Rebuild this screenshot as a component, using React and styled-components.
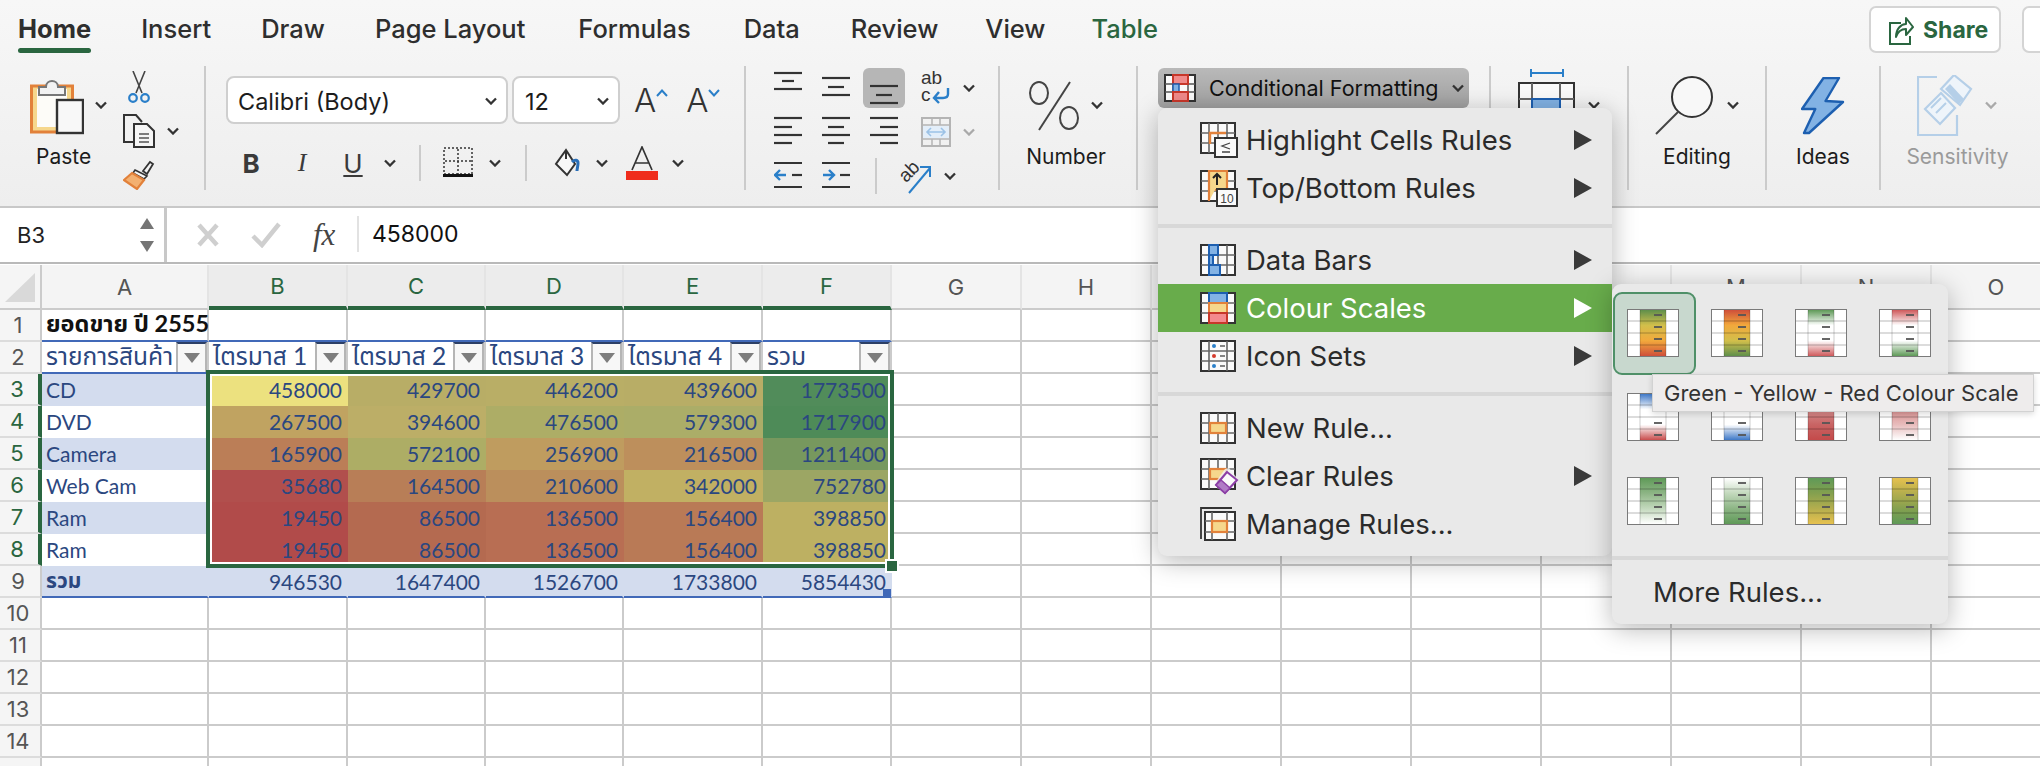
import React from "react";
import styled, { createGlobalStyle } from "styled-components";

const GREEN = "#2a6640";
const NAVY = "#2b4780";
const TABLE_BLUE = "#4169b8";
const BAND = "#d3dcee";
const GRID = "#cbcbcb";
const SHEET_FONT = `"Lato", "Noto Sans Thai", "Noto Sans Thai Looped", "Noto Sans", "DejaVu Sans", sans-serif`;

const GlobalStyle = createGlobalStyle`
  html, body { margin: 0; padding: 0; background: #fff; }
  body { font-family: "Inter", "Liberation Sans", sans-serif; color: #333; }
`;

const Page = styled.div`
  position: relative;
  width: 2040px;
  height: 766px;
  overflow: hidden;
  background: #fff;
`;

/* ribbon */
const Ribbon = styled.header`
  height: 206px;
  background: linear-gradient(#f7f7f7, #eeeeee);
  border-bottom: 2px solid #c8c8c8;
`;
const TabBar = styled.nav`
  display: flex;
  height: 66px;
  padding-left: 18px;
  gap: 50px;
  box-sizing: border-box;
`;
const Tab = styled.div`
  padding-top: 12px;
  margin-left: ${(p) => p.$ml || 0}px;
  font-size: 25.5px;
  line-height: 34px;
  font-weight: ${(p) => (p.$active ? 700 : 500)};
  color: ${(p) => (p.$green ? GREEN : "#2e2e2e")};
`;
const TabLine = styled.div`
  height: 5px;
  margin-top: 2px;
  border-radius: 3px;
  background: ${GREEN};
`;
const TabEnd = styled.div`
  margin-left: auto;
  display: flex;
  gap: 21px;
  padding-top: 6px;
`;
const ShareButton = styled.div`
  display: flex;
  align-items: center;
  gap: 9px;
  width: 132px;
  height: 47px;
  box-sizing: border-box;
  padding-left: 17px;
  background: #fff;
  border: 2px solid #d4d4d4;
  border-radius: 7px;
  color: ${GREEN};
  font-size: 23px;
  font-weight: 700;
`;
const BlankButton = styled.div`
  width: 18px;
  height: 47px;
  box-sizing: border-box;
  background: #fff;
  border: 2px solid #d4d4d4;
  border-right: 0;
  border-radius: 7px 0 0 7px;
`;
const ToolRow = styled.div`
  display: flex;
  height: 124px;
`;
const Group = styled.section`
  position: relative;
  flex: none;
  width: ${(p) => p.$w}px;
  height: 124px;
  box-sizing: border-box;
  padding-left: ${(p) => p.$pl || 0}px;
  border-right: 2px solid #cbcbcb;
  display: ${(p) => (p.$flex ? "flex" : "block")};
  justify-content: ${(p) => (p.$center ? "center" : "flex-start")};
  &:last-child { border-right: 0; }
`;
const PasteColumn = styled.div`
  display: flex;
  flex-direction: column;
  margin-right: 16px;
`;
const PasteTop = styled.div`
  display: flex;
  align-items: center;
  gap: 11px;
  margin-top: 9px;
`;
const PasteLabel = styled.div`
  margin: 10px 0 0 6px;
  font-size: 21px;
  line-height: 24px;
  color: #1c1c1c;
`;
const SmallColumn = styled.div`
  display: flex;
  flex-direction: column;
  gap: 11px;
  padding-top: 6px;
`;
const SmallTool = styled.div`
  display: flex;
  align-items: center;
  gap: 12px;
  height: 32px;
  padding-left: ${(p) => p.$pl || 0}px;
`;
const FontRow = styled.div`
  display: flex;
  align-items: center;
  height: 48px;
  margin-top: 10px;
  gap: 4px;
`;
const FontRowTwo = styled.div`
  display: flex;
  align-items: center;
  height: 36px;
  margin-top: 21px;
`;
const SelectBox = styled.div`
  display: flex;
  align-items: center;
  justify-content: space-between;
  width: ${(p) => p.$w}px;
  height: 48px;
  box-sizing: border-box;
  padding: 2px 9px 0 ${(p) => p.$pl}px;
  background: #fff;
  border: 2px solid #cfcfcf;
  border-radius: 8px;
  font-size: 23.5px;
  color: #1c1c1c;
`;
const SizeLetter = styled.div`
  display: flex;
  align-items: flex-start;
  margin-left: ${(p) => p.$ml}px;
  font-size: 33px;
  line-height: 40px;
  font-weight: 300;
  color: #333;
`;
const Slot = styled.div`
  display: flex;
  align-items: center;
  justify-content: center;
  flex: none;
  width: ${(p) => p.$w}px;
  height: 36px;
`;
const FormatLetter = styled.span`
  font-size: 26px;
  font-weight: ${(p) => (p.$bold ? 700 : 400)};
  font-style: ${(p) => (p.$italic ? "italic" : "normal")};
  font-family: ${(p) => (p.$italic ? `"Liberation Serif", serif` : `"Inter", sans-serif`)};
  text-decoration: ${(p) => (p.$under ? "underline" : "none")};
  color: #3a3a3a;
`;
const Divider = styled.div`
  flex: none;
  width: 2px;
  height: 36px;
  margin: 0 ${(p) => p.$r}px 0 ${(p) => p.$l}px;
  background: #cbcbcb;
`;
const AlignGrid = styled.div`
  display: grid;
  grid-template-columns: repeat(3, 48px) 80px;
  grid-auto-rows: 44px;
`;
const AlignCell = styled.div`
  display: flex;
  justify-content: center;
`;
const ActiveCell = styled.div`
  display: flex;
  justify-content: center;
  height: 40px;
  margin: 2px 3px;
  background: #b6b6b6;
  border-radius: 6px;
`;
const WrapCell = styled.div`
  display: flex;
  align-items: center;
  gap: 12px;
  padding-left: 13px;
`;
const OrientCell = styled.div`
  grid-column: span 2;
  display: flex;
  align-items: center;
  padding-left: 15px;
  gap: 12px;
`;
const BigTool = styled.div`
  display: flex;
  flex-direction: column;
  align-items: center;
  margin-right: ${(p) => p.$mr || 0}px;
`;
const BigTop = styled.div`
  display: flex;
  align-items: center;
  justify-content: center;
  gap: ${(p) => p.$gap || 12}px;
  height: 79px;
`;
const BigLabel = styled.div`
  font-size: 21px;
  line-height: 24px;
  color: ${(p) => (p.$muted ? "#9a9a9a" : "#1c1c1c")};
`;
const CondButton = styled.div`
  display: flex;
  align-items: center;
  gap: 13px;
  width: 311px;
  height: 40px;
  margin-top: 2px;
  box-sizing: border-box;
  padding-left: 6px;
  background: linear-gradient(#b9b9b9, #a0a0a0);
  border-radius: 6px;
  font-size: 21.5px;
  color: #111;
`;

/* formula bar */
const FormulaBar = styled.div`
  display: flex;
  height: 54px;
  background: #fff;
  border-bottom: 2px solid #b9b9b9;
`;
const NameBox = styled.div`
  display: flex;
  align-items: center;
  justify-content: space-between;
  width: 167px;
  box-sizing: border-box;
  padding: 0 10px 0 17px;
  border-right: 3px solid #c8c8c8;
  font-size: 22px;
  color: #222;
`;
const Steppers = styled.div`
  display: flex;
  flex-direction: column;
  gap: 12px;
`;
const FormulaIcons = styled.div`
  display: flex;
  align-items: center;
  width: 190px;
  padding-left: 30px;
  box-sizing: border-box;
  gap: 32px;
`;
const FxMark = styled.span`
  font-family: "Liberation Serif", serif;
  font-style: italic;
  font-size: 31px;
  color: #444;
`;
const FormulaValue = styled.div`
  display: flex;
  align-items: center;
  padding-left: 13px;
  height: 36px;
  margin-top: 8px;
  border-left: 2px solid #e2e2e2;
  font-size: 23px;
  color: #111;
`;

/* sheet */
const Sheet = styled.div`
  position: relative;
  padding-top: 1px;
  display: grid;
  grid-template-columns: 42px 167px 139px 138px 138px 139px 129px repeat(9, 130px);
  grid-template-rows: 45px;
  grid-auto-rows: 32px;
`;
const Corner = styled.div`
  display: flex;
  align-items: flex-end;
  justify-content: center;
  padding-bottom: 6px;
  box-sizing: border-box;
  background: #f5f5f5;
  border-right: 2px solid ${GRID};
  border-bottom: 2px solid ${GRID};
`;
const ColumnHead = styled.div`
  display: flex;
  align-items: center;
  justify-content: center;
  box-sizing: border-box;
  height: 45px;
  background: ${(p) => (p.$on ? "#ececec" : "#f4f4f4")};
  border-right: 2px solid #e4e4e4;
  border-bottom: ${(p) => (p.$on ? `4px solid ${GREEN}` : `2px solid ${GRID}`)};
  font-size: 22px;
  color: ${(p) => (p.$on ? GREEN : "#555")};
`;
const RowHead = styled.div`
  display: flex;
  align-items: center;
  justify-content: center;
  box-sizing: border-box;
  padding-right: 4px;
  background: #f5f5f5;
  border-right: ${(p) => (p.$on ? `4px solid ${GREEN}` : `2px solid ${GRID}`)};
  border-bottom: 2px solid #dcdcdc;
  font-size: 22px;
  color: ${(p) => (p.$on ? GREEN : "#555")};
`;
const Cell = styled.div`
  display: flex;
  align-items: center;
  justify-content: ${(p) => (p.$right ? "flex-end" : "flex-start")};
  box-sizing: border-box;
  padding: ${(p) => (p.$right ? "0 4px 0 0" : "0 0 0 4px")};
  background: ${(p) => p.$fill || "#fff"};
  border-right: 2px solid ${(p) => p.$fill || p.$edge || GRID};
  border-bottom: 2px solid ${(p) => p.$line || p.$fill || p.$edge || GRID};
  font-family: ${SHEET_FONT};
  font-size: ${(p) => p.$size || 21}px;
  font-weight: ${(p) => (p.$bold ? 700 : 400)};
  color: ${(p) => p.$ink || NAVY};
  white-space: nowrap;
`;
const HeadCell = styled(Cell)`
  justify-content: space-between;
  border-right-color: ${GRID};
`;
const FilterButton = styled.div`
  display: flex;
  align-items: center;
  justify-content: center;
  flex: none;
  width: 31px;
  height: 30px;
  box-sizing: border-box;
  background: #f7f7f7;
  border-left: 2px solid #b5b5b5;
  border-right: 2px solid #b5b5b5;
  border-top: 2px solid #2c3f66;
`;
const FilterArrow = styled.div`
  width: 0;
  height: 0;
  border-left: 8px solid transparent;
  border-right: 8px solid transparent;
  border-top: 10px solid #7d7d7d;
`;
const Selection = styled.div`
  position: absolute;
  left: 206px;
  top: 106px;
  width: 688px;
  height: 198px;
  box-sizing: border-box;
  border: 4px solid ${GREEN};
  box-shadow: inset 0 0 0 2px #fff;
  pointer-events: none;
`;
const Handle = styled.div`
  position: absolute;
  right: -9px;
  bottom: -9px;
  width: 10px;
  height: 10px;
  background: ${GREEN};
  border: 2px solid #fff;
`;
const ResizeMark = styled.div`
  position: absolute;
  left: 883px;
  top: 325px;
  width: 8px;
  height: 8px;
  background: ${TABLE_BLUE};
`;

/* menus */
const Menu = styled.div`
  position: absolute;
  left: 1158px;
  top: 108px;
  width: 454px;
  box-sizing: border-box;
  padding: 8px 0;
  background: #e9e9e9;
  border-radius: 9px;
  box-shadow: 0 5px 26px rgba(0, 0, 0, 0.28);
  z-index: 2;
`;
const MenuItem = styled.div`
  display: flex;
  align-items: center;
  height: 48px;
  padding: 0 20px 0 42px;
  gap: 7px;
  font-size: 27.5px;
  color: ${(p) => (p.$on ? "#fff" : "#2b2b2b")};
  background: ${(p) => (p.$on ? "#68ac4b" : "transparent")};
`;
const MenuIcon = styled.div`
  display: flex;
  flex: none;
  width: 39px;
`;
const MenuText = styled.span`
  flex: 1;
`;
const MenuGap = styled.div`
  height: 24px;
  box-sizing: border-box;
  padding-top: 12px;
  &::after {
    content: "";
    display: block;
    height: 4px;
    background: #d8d8d8;
  }
`;
const SubMenu = styled.div`
  position: absolute;
  left: 1612px;
  top: 284px;
  width: 336px;
  box-sizing: border-box;
  padding-top: 8px;
  background: #e9e9e9;
  border-radius: 9px;
  box-shadow: 0 5px 26px rgba(0, 0, 0, 0.28);
  z-index: 3;
`;
const SwatchGrid = styled.div`
  display: grid;
  grid-template-columns: repeat(4, 84px);
  grid-auto-rows: 84px;
  padding-left: 1px;
`;
const SwatchCell = styled.div`
  display: flex;
  align-items: center;
  justify-content: center;
  box-sizing: border-box;
  padding: 0 4px 2px 0;
  width: 83px;
  height: 83px;
  border-radius: 9px;
  border: 2px solid ${(p) => (p.$on ? "#4f9068" : "transparent")};
  background: ${(p) => (p.$on ? "#c8d8ce" : "transparent")};
`;
const SubLine = styled.div`
  height: 4px;
  margin-top: 12px;
  background: #d8d8d8;
`;
const MoreRow = styled.div`
  display: flex;
  align-items: center;
  height: 64px;
  padding-left: 41px;
  font-size: 27.5px;
  color: #2b2b2b;
`;
const Tooltip = styled.div`
  position: absolute;
  left: 1652px;
  top: 374px;
  width: 382px;
  height: 38px;
  box-sizing: border-box;
  display: flex;
  align-items: center;
  padding-left: 11px;
  background: #eeecec;
  border: 1px solid #d2d2d2;
  box-shadow: 0 2px 6px rgba(0, 0, 0, 0.15);
  font-size: 22px;
  color: #333;
  white-space: nowrap;
  z-index: 4;
`;

/* icons */
const Chevron = ({ muted, size = 12 }) => (
  <svg width={size} height={size * 0.67} viewBox="0 0 12 8" style={{ flex: "none" }}>
    <polyline points="1,1.5 6,6.5 11,1.5" fill="none" stroke={muted ? "#a9a9a9" : "#333"} strokeWidth="2.3" />
  </svg>
);

const ORANGE = "#e2813a";
const YELLOW = "#f6d78c";

const GridIcon = ({ children, w = 36, h = 32, cols = [9, 18, 27] }) => (
  <svg width={w} height={h} viewBox={`0 0 ${w} ${h}`} style={{ flex: "none", overflow: "visible" }}>
    <rect x="1" y="1" width="34" height="30" fill="#fafafa" stroke="#333" strokeWidth="2" />
    {cols.map((x) => (
      <line key={x} x1={x} x2={x} y1="1" y2="31" stroke="#666" strokeWidth="1.6" />
    ))}
    <line x1="1" x2="35" y1="11" y2="11" stroke="#666" strokeWidth="1.6" />
    <line x1="1" x2="35" y1="21" y2="21" stroke="#666" strokeWidth="1.6" />
    {children}
  </svg>
);

const HighlightIcon = () => (
  <GridIcon w={38} h={36}>
    <path d="M10 22V11H26" fill="none" stroke={ORANGE} strokeWidth="2.4" />
    <rect x="15" y="16" width="22" height="19" fill="#fafafa" stroke="#333" strokeWidth="2" />
    <path d="M30 21l-8 3 8 3M22 30h8" fill="none" stroke="#444" strokeWidth="1.3" />
  </GridIcon>
);
const TopBottomIcon = () => (
  <GridIcon w={38} h={36}>
    <path d="M9 31V1H27V20H15" fill={YELLOW} stroke={ORANGE} strokeWidth="2.2" />
    <path d="M17 15V5M13 8l4-4 4 4" fill="none" stroke="#222" strokeWidth="2" />
    <rect x="17" y="19" width="20" height="17" fill="#fafafa" stroke="#333" strokeWidth="2" />
    <text x="27" y="33" fontSize="12" textAnchor="middle" fill="#444" fontFamily="Liberation Sans">10</text>
  </GridIcon>
);
const BLUE_FILL = "#82b2e4";
const BLUE_LINE = "#1d5fb0";
const DataBarsIcon = () => (
  <GridIcon>
    <rect x="9" y="1" width="9" height="10" fill={BLUE_FILL} stroke={BLUE_LINE} strokeWidth="2" />
    <rect x="9" y="11" width="4" height="10" fill={BLUE_FILL} stroke={BLUE_LINE} strokeWidth="2" />
    <rect x="9" y="21" width="11" height="10" fill={BLUE_FILL} stroke={BLUE_LINE} strokeWidth="2" />
  </GridIcon>
);
const ColourScalesIcon = () => (
  <GridIcon cols={[9, 27]}>
    <rect x="9" y="1" width="18" height="10" fill={BLUE_FILL} stroke={BLUE_LINE} strokeWidth="2" />
    <rect x="9" y="11" width="18" height="10" fill={YELLOW} stroke={ORANGE} strokeWidth="2" />
    <rect x="9" y="21" width="18" height="10" fill="#f48a8e" stroke="#c8372a" strokeWidth="2" />
  </GridIcon>
);
const IconSetsIcon = () => (
  <GridIcon cols={[9, 27]}>
    {[6, 16, 26].map((y, i) => (
      <g key={y}>
        <circle cx="14" cy={y} r="2" fill={i === 1 ? "#d33a2c" : "#2a7fc9"} />
        <line x1="20" x2="25" y1={y} y2={y} stroke="#666" strokeWidth="1.6" />
      </g>
    ))}
  </GridIcon>
);
const NewRuleIcon = () => (
  <GridIcon>
    <rect x="10" y="11" width="16" height="10" fill={YELLOW} stroke={ORANGE} strokeWidth="2.2" />
  </GridIcon>
);
const ClearRulesIcon = () => (
  <GridIcon w={38} h={36}>
    <rect x="10" y="11" width="16" height="10" fill={YELLOW} stroke={ORANGE} strokeWidth="2.2" />
    <path d="M25 11l4-1 8 10-12 14-10-9z" fill="#f2f2f2" opacity="0.8" />
    <path d="M27 14l10 8-12 13-9-8z" fill="#fafafa" stroke="#8c3fa6" strokeWidth="2" />
    <path d="M21 22l9 8-5 5-9-8z" fill="#b07cc6" stroke="#8c3fa6" strokeWidth="1.5" />
  </GridIcon>
);
const ManageRulesIcon = () => (
  <svg width="36" height="34" viewBox="0 0 36 34" style={{ flex: "none" }}>
    <path d="M1 32V1H32" fill="none" stroke="#333" strokeWidth="1.8" />
    <rect x="5" y="5" width="30" height="28" fill="#fafafa" stroke="#333" strokeWidth="2" />
    <path d="M12 5V33M27 5V33M5 14H35M5 25H35" stroke="#666" strokeWidth="1.6" />
    <rect x="12" y="14" width="15" height="11" fill={YELLOW} stroke={ORANGE} strokeWidth="2.2" />
  </svg>
);
const SubArrow = ({ on }) => (
  <svg width="18" height="20" viewBox="0 0 18 20" style={{ flex: "none" }}>
    <polygon points="0,0 18,10 0,20" fill={on ? "#fff" : "#3a3a3a"} />
  </svg>
);
const CondIcon = () => (
  <svg width="32" height="28" viewBox="0 0 32 28" style={{ flex: "none" }}>
    <rect x="1" y="1" width="30" height="26" fill="#fafafa" stroke="#333" strokeWidth="2" />
    <path d="M9 1V27M24 1V27M1 10H31M1 18H31" stroke="#555" strokeWidth="1.5" />
    <rect x="9" y="1" width="15" height="9" fill="#f08a8a" stroke="#c8372a" strokeWidth="2" />
    <rect x="9" y="10" width="6" height="8" fill={BLUE_FILL} stroke={BLUE_LINE} strokeWidth="1.5" />
    <rect x="9" y="18" width="15" height="9" fill="#f08a8a" stroke="#c8372a" strokeWidth="2" />
  </svg>
);
const PasteIcon = () => (
  <svg width="54" height="60" viewBox="0 0 54 60">
    <rect x="1.5" y="11" width="41" height="46" fill={YELLOW} stroke={ORANGE} strokeWidth="3" />
    <rect x="7" y="14" width="30" height="38" fill="#fdfcf8" />
    <path d="M9 20V12H16C16 4 28 4 28 12H35V20Z" fill="#f2f2f2" stroke="#777" strokeWidth="2" />
    <rect x="27" y="25" width="26" height="33" fill="#f8f8f8" stroke="#333" strokeWidth="2.4" />
  </svg>
);
const ScissorsIcon = () => (
  <svg width="22" height="34" viewBox="0 0 22 34">
    <path d="M5 0L14 22M17 0L8 22" stroke="#444" strokeWidth="1.6" fill="none" />
    <circle cx="5" cy="27" r="3.8" fill="none" stroke="#2a7fc9" strokeWidth="2.2" />
    <circle cx="17" cy="27" r="3.8" fill="none" stroke="#2a7fc9" strokeWidth="2.2" />
  </svg>
);
const CopyIcon = () => (
  <svg width="32" height="34" viewBox="0 0 32 34">
    <path d="M13 28H1V1H13L19 8" fill="none" stroke="#333" strokeWidth="2" />
    <path d="M11 10H24L31 17V33H11Z" fill="#f6f6f6" stroke="#333" strokeWidth="2" />
    <path d="M16 20H26M16 24H26M16 28H26" stroke="#555" strokeWidth="1.5" />
  </svg>
);
const BrushIcon = () => (
  <svg width="32" height="32" viewBox="0 0 32 32">
    <path d="M20 13l7-9 3 2-6 10z" fill="#f4f4f4" stroke="#333" strokeWidth="1.8" />
    <path d="M12 12l12 6-3 3-11-6z" fill="#f7f7f7" stroke="#333" strokeWidth="1.6" />
    <path d="M9 15l12 7-7 9L1 22z" fill="#f3b070" stroke={ORANGE} strokeWidth="2.2" />
  </svg>
);
const BorderIcon = () => (
  <svg width="30" height="32" viewBox="0 0 30 32">
    <rect x="1" y="1" width="28" height="26" fill="none" stroke="#333" strokeWidth="1.5" strokeDasharray="2 2" />
    <path d="M15 2V27M2 14H28" stroke="#333" strokeWidth="1.5" strokeDasharray="2 2" />
    <rect x="0" y="27" width="30" height="3" fill="#111" />
  </svg>
);
const BucketIcon = () => (
  <svg width="26" height="30" viewBox="0 0 26 30">
    <path d="M12 2l9 14-8 11-11-11z" fill="#f8f8f8" stroke="#333" strokeWidth="2" />
    <path d="M12 2v9" stroke="#333" strokeWidth="2" />
    <path d="M18 14c3-3 6-2 6 1s-1 6-1 8" fill="none" stroke="#2a6fb8" strokeWidth="3" />
  </svg>
);
const FontColorIcon = () => (
  <svg width="34" height="34" viewBox="0 0 34 34">
    <path d="M7 24L17 1L27 24M10 17H24" fill="none" stroke="#333" strokeWidth="1.7" />
    <rect x="1" y="25" width="32" height="9" fill="#ef2d1c" />
  </svg>
);
const Lines = ({ rows, h = 44, w = 28 }) => (
  <svg width={w} height={h} viewBox={`0 0 ${w} ${h}`} style={{ flex: "none" }}>
    {rows.map(([x1, x2, y]) => (
      <line key={`${x1}-${y}`} x1={x1} x2={x2} y1={y} y2={y} stroke="#333" strokeWidth="2.2" />
    ))}
  </svg>
);
const IndentIcon = ({ flip }) => (
  <svg width="28" height="44" viewBox="0 0 28 44" style={{ flex: "none" }}>
    <path d="M0 9H28M0 33H28" stroke="#333" strokeWidth="2.2" />
    <path d="M18 21H28" stroke="#333" strokeWidth="2.2" />
    <path
      d={flip ? "M1 21H11M7 16l5 5-5 5" : "M12 21H2M6 16l-5 5 5 5"}
      fill="none"
      stroke="#2a7fc9"
      strokeWidth="2.4"
    />
  </svg>
);
const WrapIcon = () => (
  <svg width="30" height="36" viewBox="0 0 30 36">
    <text x="0" y="14" fontSize="19" fill="#333" fontFamily="Liberation Sans">ab</text>
    <text x="0" y="31" fontSize="19" fill="#333" fontFamily="Liberation Sans">c</text>
    <path d="M27 18v6c0 3-2 4-5 4h-9M18 22l-5 6 5 5" fill="none" stroke="#2a7fc9" strokeWidth="2.4" />
  </svg>
);
const MergeIcon = () => (
  <svg width="30" height="30" viewBox="0 0 30 30">
    <rect x="1" y="1" width="28" height="28" fill="none" stroke="#b4b4b4" strokeWidth="2" />
    <path d="M1 8H29M1 22H29M11 1V8M19 1V8M11 22V29M19 22V29" stroke="#b4b4b4" strokeWidth="1.5" />
    <rect x="2" y="9" width="26" height="12" fill="#e3eef9" />
    <path d="M6 15H24M10 11l-4 4 4 4M20 11l4 4-4 4" fill="none" stroke="#9cc2e6" strokeWidth="1.6" />
  </svg>
);
const OrientIcon = () => (
  <svg width="34" height="36" viewBox="0 0 34 36">
    <text x="2" y="21" fontSize="19" fill="#333" fontFamily="Liberation Sans" transform="rotate(-45 10 16)">ab</text>
    <path d="M11 35L32 10M22 9h10v10" fill="none" stroke="#2a7fc9" strokeWidth="2" />
  </svg>
);
const PercentIcon = () => (
  <svg width="50" height="50" viewBox="0 0 50 50">
    <ellipse cx="10" cy="12" rx="9" ry="11" fill="none" stroke="#444" strokeWidth="2" />
    <ellipse cx="40" cy="37" rx="9" ry="11" fill="none" stroke="#444" strokeWidth="2" />
    <line x1="41" y1="1" x2="10" y2="49" stroke="#444" strokeWidth="2" />
  </svg>
);
const TableIcon = () => (
  <svg width="58" height="74" viewBox="0 0 58 74">
    <path d="M13 4H45M13 0V8M45 0V8" stroke="#2a7fc9" strokeWidth="2" />
    <rect x="1" y="14" width="55" height="58" fill="#fafafa" stroke="#333" strokeWidth="2" />
    <path d="M14 14V72M42 14V72M1 30H56" stroke="#666" strokeWidth="2" />
    <rect x="14" y="30" width="28" height="42" fill={BLUE_FILL} stroke={BLUE_LINE} strokeWidth="2" />
  </svg>
);
const MagnifierIcon = () => (
  <svg width="60" height="60" viewBox="0 0 60 60">
    <circle cx="37" cy="21" r="20" fill="#f8f8f8" stroke="#333" strokeWidth="2" />
    <line x1="23" y1="36" x2="1" y2="58" stroke="#444" strokeWidth="2" />
  </svg>
);
const BoltIcon = () => (
  <svg width="44" height="58" viewBox="0 0 44 58">
    <polygon
      points="22.5,1 38,1 24.5,24 42,25 8,56 3,56 14.3,32 1,32"
      fill={BLUE_FILL}
      stroke={BLUE_LINE}
      strokeWidth="2.4"
      strokeLinejoin="round"
    />
  </svg>
);
const SensitivityIcon = () => (
  <svg width="56" height="62" viewBox="0 0 56 62">
    <path d="M20 2H1V60H40V40" fill="none" stroke="#b5cfe8" strokeWidth="2.2" />
    <path d="M8 34L24 18L38 33L23 49Z" fill="#eef4fa" stroke="#b5cfe8" strokeWidth="2.2" />
    <path d="M14 33L24 23M19 38L29 28" stroke="#b5cfe8" strokeWidth="2" />
    <path d="M24 14L37 0L54 14L43 30Z" fill="#eef4fa" stroke="#b5cfe8" strokeWidth="2.2" />
    <path d="M28 14L42 29L47 24L33 9Z" fill="#b5cfe8" />
  </svg>
);
const ShareIcon = () => (
  <svg width="26" height="30" viewBox="0 0 26 30">
    <path d="M13 8H2V29H22V21" fill="none" stroke={GREEN} strokeWidth="2" />
    <path d="M8 22c0-8 5-13 10-13V3l7 9-7 8v-6c-4 0-8 2-10 8z" fill="none" stroke={GREEN} strokeWidth="2" strokeLinejoin="round" />
  </svg>
);
const Stepper = ({ down }) => (
  <svg width="14" height="11" viewBox="0 0 14 11">
    <polygon points={down ? "0,0 14,0 7,11" : "7,0 14,11 0,11"} fill="#757575" />
  </svg>
);
const CrossIcon = () => (
  <svg width="22" height="24" viewBox="0 0 22 24">
    <path d="M2 2L20 22M20 2L2 22" stroke="#cfcfcf" strokeWidth="4.5" />
  </svg>
);
const CheckIcon = () => (
  <svg width="30" height="26" viewBox="0 0 30 26">
    <path d="M2 14L11 23L28 2" fill="none" stroke="#cfcfcf" strokeWidth="4.5" />
  </svg>
);
const CornerMark = () => (
  <svg width="30" height="29" viewBox="0 0 30 29">
    <polygon points="30,0 30,29 0,29" fill="#d9d9d9" />
  </svg>
);

const scaleSets = [
  ["#5f8f4b", "#d2bf4b", "#f2a93c", "#cf4f3a"],
  ["#cf4f3a", "#f2a93c", "#d2bf4b", "#5f8f4b"],
  ["#5f9a58", "#ffffff", "#ffffff", "#cf5a5c"],
  ["#cf5a5c", "#ffffff", "#ffffff", "#5f9a58"],
  ["#3f79c8", "#ffffff", "#ffffff", "#c94d4d"],
  ["#c94d4d", "#ffffff", "#ffffff", "#3f79c8"],
  ["#ffffff", "#d88f8f", "#c86464", "#c44a4a"],
  ["#c44a4a", "#d88f8f", "#e8bcbc", "#ffffff"],
  ["#5f9a58", "#8db585", "#c3d9bd", "#ffffff"],
  ["#ffffff", "#c3d9bd", "#8db585", "#5f9a58"],
  ["#5f9a58", "#84a04f", "#b4ae4e", "#e6c14f"],
  ["#e6c14f", "#b4ae4e", "#84a04f", "#5f9a58"],
];

const ScaleSwatch = ({ id, stops }) => (
  <svg width="52" height="48" viewBox="0 0 52 48">
    <defs>
      <linearGradient id={id} x1="0" x2="0" y1="0" y2="1">
        {stops.map((c, i) => (
          <stop key={i} offset={i / (stops.length - 1)} stopColor={c} />
        ))}
      </linearGradient>
    </defs>
    <rect x="0.5" y="0.5" width="51" height="47" fill="#fff" stroke="#7a7a7a" />
    <rect x="13" y="1" width="26" height="46" fill={`url(#${id})`} />
    {[12, 24, 36].map((y) => (
      <line key={y} x1="1" x2="51" y1={y} y2={y} stroke="#000" strokeOpacity="0.28" />
    ))}
    <path d="M13 1V47M39 1V47" stroke="#000" strokeOpacity="0.2" />
    {[6, 18, 30, 42].map((y) => (
      <line key={y} x1="27" x2="35" y1={y} y2={y} stroke="#555" strokeWidth="1.8" />
    ))}
  </svg>
);

/* data */
const columns = ["A", "B", "C", "D", "E", "F", "G", "H", "I", "J", "K", "L", "M", "N", "O"];
const onColumns = ["B", "C", "D", "E", "F"];
const filler = columns.length - 6;

const headers = ["รายการสินค้า", "ไตรมาส 1", "ไตรมาส 2", "ไตรมาส 3", "ไตรมาส 4", "รวม"];

const body = [
  { name: "CD", values: [
    [458000, "#ece17f"], [429700, "#b8ad66"], [446200, "#b9ae66"], [439600, "#b8ad66"], [1773500, "#518c5a"],
  ] },
  { name: "DVD", values: [
    [267500, "#c0a361"], [394600, "#bcae67"], [476500, "#adad66"], [579300, "#abad68"], [1717900, "#4e8b58"],
  ] },
  { name: "Camera", values: [
    [165900, "#bb7e57"], [572100, "#adad65"], [256900, "#bf9c5f"], [216500, "#bd8f5c"], [1211400, "#77985e"],
  ] },
  { name: "Web Cam", values: [
    [35680, "#b14f4d"], [164500, "#b87e57"], [210600, "#bb8f5c"], [342000, "#c1b063"], [752780, "#9ca664"],
  ] },
  { name: "Ram", values: [
    [19450, "#b14b4a"], [86500, "#b46a50"], [136500, "#b86e53"], [156400, "#b97a56"], [398850, "#bdb062"],
  ] },
  { name: "Ram", values: [
    [19450, "#b14b4a"], [86500, "#b46a50"], [136500, "#b86e53"], [156400, "#b97a56"], [398850, "#bdb062"],
  ] },
];
const totals = [946530, 1647400, 1526700, 1733800, 5854430];

const menuTop = [
  ["Highlight Cells Rules", HighlightIcon],
  ["Top/Bottom Rules", TopBottomIcon],
];
const menuMid = [
  ["Data Bars", DataBarsIcon],
  ["Colour Scales", ColourScalesIcon, true],
  ["Icon Sets", IconSetsIcon],
];

const Filler = ({ row }) =>
  Array.from({ length: filler }, (_, i) => <Cell key={`${row}-${i}`} />);

const App = () => (
  <Page>
    <GlobalStyle />
    <Ribbon>
      <TabBar>
        <Tab $active>
          Home
          <TabLine />
        </Tab>
        <Tab>Insert</Tab>
        <Tab>Draw</Tab>
        <Tab>Page Layout</Tab>
        <Tab $ml={3}>Formulas</Tab>
        <Tab $ml={3}>Data</Tab>
        <Tab $ml={1}>Review</Tab>
        <Tab $ml={-3}>View</Tab>
        <Tab $ml={-4} $green>Table</Tab>
        <TabEnd>
          <ShareButton>
            <ShareIcon />
            Share
          </ShareButton>
          <BlankButton />
        </TabEnd>
      </TabBar>
      <ToolRow>
        <Group $w={206} $pl={30} $flex>
          <PasteColumn>
            <PasteTop>
              <PasteIcon />
              <Chevron />
            </PasteTop>
            <PasteLabel>Paste</PasteLabel>
          </PasteColumn>
          <SmallColumn>
            <SmallTool $pl={5}>
              <ScissorsIcon />
            </SmallTool>
            <SmallTool>
              <CopyIcon />
              <Chevron />
            </SmallTool>
            <SmallTool>
              <BrushIcon />
            </SmallTool>
          </SmallColumn>
        </Group>
        <Group $w={540} $pl={20}>
          <FontRow>
            <SelectBox $w={282} $pl={10}>
              Calibri (Body)
              <Chevron />
            </SelectBox>
            <SelectBox $w={108} $pl={11}>
              12
              <Chevron />
            </SelectBox>
            <SizeLetter $ml={10}>
              A
              <svg width="12" height="8" viewBox="0 0 12 8" style={{ marginTop: 9 }}>
                <polyline points="1,7 6,1.5 11,7" fill="none" stroke="#2a7fc9" strokeWidth="2" />
              </svg>
            </SizeLetter>
            <SizeLetter $ml={14}>
              A
              <svg width="12" height="8" viewBox="0 0 12 8" style={{ marginTop: 9 }}>
                <polyline points="1,1 6,6.5 11,1" fill="none" stroke="#2a7fc9" strokeWidth="2" />
              </svg>
            </SizeLetter>
          </FontRow>
          <FontRowTwo>
            <Slot $w={50}><FormatLetter $bold>B</FormatLetter></Slot>
            <Slot $w={52}><FormatLetter $italic>I</FormatLetter></Slot>
            <Slot $w={50}><FormatLetter $under>U</FormatLetter></Slot>
            <Slot $w={24}><Chevron /></Slot>
            <Divider $l={17} $r={17} />
            <Slot $w={40}><BorderIcon /></Slot>
            <Slot $w={34}><Chevron /></Slot>
            <Divider $l={13} $r={20} />
            <Slot $w={40}><BucketIcon /></Slot>
            <Slot $w={30}><Chevron /></Slot>
            <Slot $w={50}><FontColorIcon /></Slot>
            <Slot $w={22}><Chevron /></Slot>
          </FontRowTwo>
        </Group>
        <Group $w={254} $pl={18}>
          <AlignGrid>
            <AlignCell><Lines rows={[[0, 28, 7], [8, 20, 15], [0, 28, 23]]} /></AlignCell>
            <AlignCell><Lines rows={[[0, 28, 12], [6, 22, 21], [0, 28, 29]]} /></AlignCell>
            <ActiveCell><Lines h={40} rows={[[0, 28, 18], [6, 22, 27], [0, 28, 35]]} /></ActiveCell>
            <WrapCell><WrapIcon /><Chevron /></WrapCell>
            <AlignCell><Lines rows={[[0, 28, 8], [0, 18, 17], [0, 28, 25], [0, 18, 33]]} /></AlignCell>
            <AlignCell><Lines rows={[[0, 28, 8], [6, 22, 17], [0, 28, 25], [6, 22, 33]]} /></AlignCell>
            <AlignCell><Lines rows={[[0, 28, 8], [10, 28, 17], [0, 28, 25], [10, 28, 33]]} /></AlignCell>
            <WrapCell><MergeIcon /><Chevron muted /></WrapCell>
            <AlignCell><IndentIcon /></AlignCell>
            <AlignCell><IndentIcon flip /></AlignCell>
            <OrientCell>
              <Divider $l={0} $r={9} />
              <OrientIcon />
              <Chevron />
            </OrientCell>
          </AlignGrid>
        </Group>
        <Group $w={138} $flex $center>
          <BigTool $mr={4}>
            <BigTop><PercentIcon /><Chevron /></BigTop>
            <BigLabel>Number</BigLabel>
          </BigTool>
        </Group>
        <Group $w={353} $pl={20}>
          <CondButton>
            <CondIcon />
            Conditional Formatting
            <Chevron />
          </CondButton>
        </Group>
        <Group $w={138} $flex $center>
          <BigTool>
            <BigTop><TableIcon /><Chevron /></BigTop>
          </BigTool>
        </Group>
        <Group $w={138} $flex $center>
          <BigTool>
            <BigTop><MagnifierIcon /><Chevron /></BigTop>
            <BigLabel>Editing</BigLabel>
          </BigTool>
        </Group>
        <Group $w={114} $flex $center>
          <BigTool>
            <BigTop><BoltIcon /></BigTop>
            <BigLabel>Ideas</BigLabel>
          </BigTool>
        </Group>
        <Group $w={159} $flex $center>
          <BigTool $mr={6}>
            <BigTop><SensitivityIcon /><Chevron muted /></BigTop>
            <BigLabel $muted>Sensitivity</BigLabel>
          </BigTool>
        </Group>
      </ToolRow>
    </Ribbon>

    <FormulaBar>
      <NameBox>
        B3
        <Steppers>
          <Stepper />
          <Stepper down />
        </Steppers>
      </NameBox>
      <FormulaIcons>
        <CrossIcon />
        <CheckIcon />
        <FxMark>fx</FxMark>
      </FormulaIcons>
      <FormulaValue>458000</FormulaValue>
    </FormulaBar>

    <Sheet>
      <Corner><CornerMark /></Corner>
      {columns.map((c) => (
        <ColumnHead key={c} $on={onColumns.includes(c)}>{c}</ColumnHead>
      ))}

      <RowHead>1</RowHead>
      <Cell $bold $ink="#111" $size={23.5} $line={TABLE_BLUE}>ยอดขาย ปี 2555</Cell>
      {[0, 1, 2, 3, 4].map((i) => <Cell key={i} $line={TABLE_BLUE} />)}
      <Filler row="r1" />

      <RowHead>2</RowHead>
      {headers.map((h) => (
        <HeadCell key={h} $size={24.5} $line={TABLE_BLUE}>
          {h}
          <FilterButton><FilterArrow /></FilterButton>
        </HeadCell>
      ))}
      <Filler row="r2" />

      {body.map((row, r) => (
        <React.Fragment key={r}>
          <RowHead $on>{r + 3}</RowHead>
          <Cell $fill={r % 2 === 0 ? BAND : undefined} $edge="#fff">{row.name}</Cell>
          {row.values.map(([v, c]) => (
            <Cell key={`${v}-${c}`} $right $fill={c}>{v}</Cell>
          ))}
          <Filler row={`b${r}`} />
        </React.Fragment>
      ))}

      <RowHead>9</RowHead>
      <Cell $fill={BAND} $bold $line={TABLE_BLUE}>รวม</Cell>
      {totals.map((v) => (
        <Cell key={v} $right $fill={BAND} $line={TABLE_BLUE}>{v}</Cell>
      ))}
      <Filler row="r9" />

      {[10, 11, 12, 13, 14].map((n) => (
        <React.Fragment key={n}>
          <RowHead>{n}</RowHead>
          {columns.map((c) => <Cell key={c} />)}
        </React.Fragment>
      ))}
      <RowHead />
      {columns.map((c) => <Cell key={c} />)}

      <Selection><Handle /></Selection>
      <ResizeMark />
    </Sheet>

    <Menu>
      {menuTop.map(([label, Icon]) => (
        <MenuItem key={label}>
          <MenuIcon><Icon /></MenuIcon>
          <MenuText>{label}</MenuText>
          <SubArrow />
        </MenuItem>
      ))}
      <MenuGap />
      {menuMid.map(([label, Icon, on]) => (
        <MenuItem key={label} $on={on}>
          <MenuIcon><Icon /></MenuIcon>
          <MenuText>{label}</MenuText>
          <SubArrow on={on} />
        </MenuItem>
      ))}
      <MenuGap />
      <MenuItem>
        <MenuIcon><NewRuleIcon /></MenuIcon>
        <MenuText>New Rule...</MenuText>
      </MenuItem>
      <MenuItem>
        <MenuIcon><ClearRulesIcon /></MenuIcon>
        <MenuText>Clear Rules</MenuText>
        <SubArrow />
      </MenuItem>
      <MenuItem>
        <MenuIcon><ManageRulesIcon /></MenuIcon>
        <MenuText>Manage Rules...</MenuText>
      </MenuItem>
    </Menu>

    <SubMenu>
      <SwatchGrid>
        {scaleSets.map((stops, i) => (
          <SwatchCell key={i} $on={i === 0}>
            <ScaleSwatch id={`scale-${i}`} stops={stops} />
          </SwatchCell>
        ))}
      </SwatchGrid>
      <SubLine />
      <MoreRow>More Rules...</MoreRow>
    </SubMenu>
    <Tooltip>Green - Yellow - Red Colour Scale</Tooltip>
  </Page>
);

export default App;
